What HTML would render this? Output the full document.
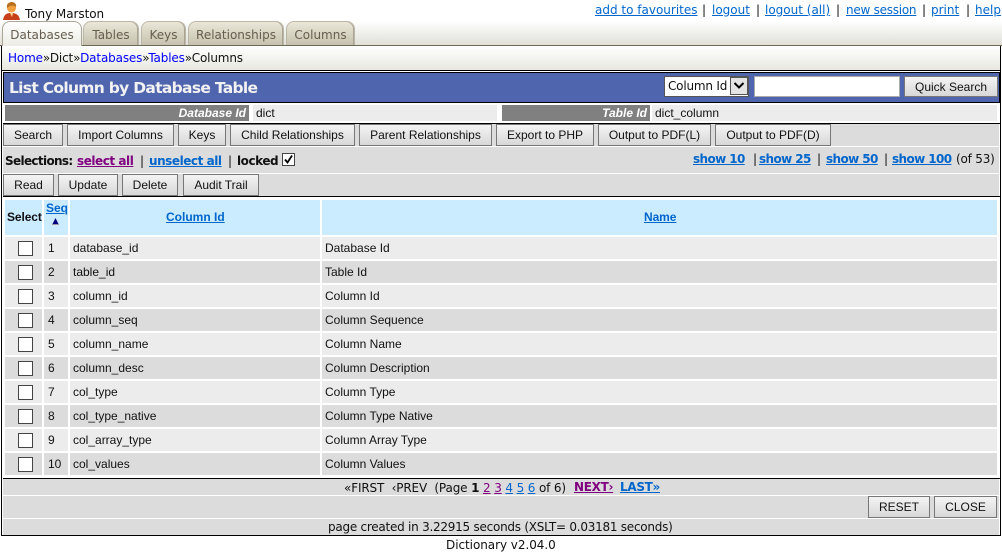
<!DOCTYPE html>
<html><head><meta charset="utf-8"><title>List Column by Database Table</title>
<style>
html,body{margin:0;padding:0;background:#fff;width:1002px;height:555px;overflow:hidden}
#p{position:relative;width:1002px;height:555px;overflow:hidden;font:12px "DejaVu Sans",sans-serif;color:#111}
#p div,#p a,#p span.a{position:absolute;white-space:nowrap}
#p .i,#p .i a,#p a.i{position:static}
a{color:#0066cc;text-decoration:underline}
a.v{color:#800080}
.b{box-sizing:border-box;border:1px solid #777;background:linear-gradient(#f4f4f4,#d8d8d8);font:12px/20px "Liberation Sans",sans-serif;text-align:center;color:#111}
.s{background:#dcdcdc}
.k{background:#000}
.w{background:#fff}
.t{font:12px/22px "Liberation Sans",sans-serif;color:#111}
.tab{box-sizing:border-box;top:21px;height:24px;border:1px solid #bdb8a6;border-bottom:0;border-radius:8px 8px 0 0;background:linear-gradient(#ebe7d9,#c6c2ae);font:12px/26px "DejaVu Sans",sans-serif;color:#655d4e;text-align:center;box-shadow:inset -1px 0 0 #a8a392}
.h{background:#cbebff}
.l{background:#808080;color:#fff;font:italic bold 12px/16px "Liberation Sans",sans-serif;text-align:right;box-sizing:border-box;padding-right:3px;height:16px;top:105px}
.f{background:#ececec;font:12px/16px "Liberation Sans",sans-serif;box-sizing:border-box;padding-left:3px;height:16px;top:105px}
.cb{box-sizing:border-box;width:15px;height:15px;left:18px;border:1px solid #444;background:#fff}
.tl{top:2px;line-height:16px}
.sl{top:153px;line-height:16px;letter-spacing:-.45px;font-weight:bold}
.sh{top:151px;line-height:16px;letter-spacing:-.6px;font-weight:bold}
.pg{top:480px;line-height:15px;letter-spacing:-.3px;font-weight:bold}
</style></head><body><div id="p">

<div style="left:0;top:21px;width:1002px;height:24px;background:linear-gradient(#fff,#e0e0d8)"></div>
<svg style="position:absolute;left:3px;top:2px" width="17" height="19" viewBox="0 0 17 19"><path d="M0 18C1 12 4 11 8 11s8 1 9 7z" fill="#c8401a"/><circle cx="8.500" cy="6" r="4.500" fill="#f0a040"/><path d="M4 6C3 1 7 0 9 0s5 2 4 5c-2-2-6-2-9 1z" fill="#b87020"/><path d="M7 11h3l-1 4z" fill="#f6d890"/></svg>
<div style="left:25px;top:6px;line-height:16px;letter-spacing:-.05px">Tony Marston</div>

<a class="tl" href="#" style="left:595px">add to favourites</a><div class="tl" style="left:702px">|</div>
<a class="tl" href="#" style="left:712px">logout</a><div class="tl" style="left:756px">|</div>
<a class="tl" href="#" style="left:765px">logout (all)</a><div class="tl" style="left:836px">|</div>
<a class="tl" href="#" style="left:846px;letter-spacing:-.25px">new session</a><div class="tl" style="left:922px">|</div>
<a class="tl" href="#" style="left:931px">print</a><div class="tl" style="left:966px">|</div>
<a class="tl" href="#" style="left:975px">help</a>

<div class="tab" style="left:2px;width:80px;height:25px;background:linear-gradient(#fff,#ececE4);border-color:#aaa596;z-index:2;box-shadow:none">Databases</div>
<div class="tab" style="left:83px;width:56px">Tables</div>
<div class="tab" style="left:141px;width:45px">Keys</div>
<div class="tab" style="left:188px;width:96px">Relationships</div>
<div class="tab" style="left:286px;width:69px">Columns</div>

<div style="left:0;top:45px;width:1002px;height:1px;background:#6e6858"></div>
<div style="left:1px;top:46px;width:1000px;height:24px;background:linear-gradient(#fff,#e8e8e0)"></div>
<div class="k" style="left:1px;top:46px;width:1px;height:490px"></div>
<div class="k" style="left:1000px;top:46px;width:1px;height:490px"></div>
<div style="left:8px;top:50px;line-height:16px;letter-spacing:-.15px"><span class="i"><a class="i" style="color:#00f;text-decoration:none" href="#">Home</a>»Dict»<a class="i" style="color:#00f;text-decoration:none" href="#">Databases</a>»<a class="i" style="color:#00f;text-decoration:none" href="#">Tables</a>»Columns</span></div>

<div class="k" style="left:1px;top:70px;width:1000px;height:1px"></div>
<div style="left:3px;top:72px;width:995px;height:29px;background:#4f65ae;border:1px solid #000"></div>
<div style="left:9px;top:77px;color:#f2f2f2;font:bold 15.500px/22px 'DejaVu Sans',sans-serif;letter-spacing:-.7px">List Column by Database Table</div>

<div style="left:664px;top:76px;width:85px;height:21px;box-sizing:border-box;border:1px solid #555;background:#fff;font:12px/19px 'DejaVu Sans',sans-serif;padding-left:3px;letter-spacing:-.2px">Column Id</div>
<div style="left:730px;top:77px;width:18px;height:18px;box-sizing:border-box;border:1px solid #555;background:#e4e4e4"></div>
<svg style="position:absolute;left:733px;top:82px" width="12" height="8" viewBox="0 0 12 8"><path d="M1.500 1L6 5.500 10.500 1" fill="none" stroke="#000" stroke-width="2"/></svg>
<div style="left:754px;top:76px;width:146px;height:21px;box-sizing:border-box;border:1px solid #aaa;background:#fff"></div>
<div class="b" style="left:904px;top:76px;width:94px;height:21px;line-height:20px">Quick Search</div>

<div class="l" style="left:5px;width:244px">Database Id</div>
<div class="f" style="left:253px;width:244px">dict</div>
<div class="l" style="left:502px;width:148px">Table Id</div>
<div class="f" style="left:652px;width:345px">dict_column</div>

<div class="k" style="left:3px;top:123px;width:997px;height:1px"></div>
<div class="s" style="left:3px;top:124px;width:996px;height:22px"></div>
<div class="w" style="left:3px;top:146px;width:996px;height:1px"></div>
<div class="s" style="left:3px;top:147px;width:996px;height:26px"></div>
<div class="w" style="left:3px;top:173px;width:996px;height:1px"></div>
<div class="s" style="left:3px;top:174px;width:996px;height:22px"></div>
<div class="k" style="left:3px;top:196px;width:997px;height:1px"></div>

<div class="b" style="left:3px;top:124px;width:60px;height:22px">Search</div>
<div class="b" style="left:67px;top:124px;width:107px;height:22px">Import Columns</div>
<div class="b" style="left:178px;top:124px;width:48px;height:22px">Keys</div>
<div class="b" style="left:230px;top:124px;width:125px;height:22px">Child Relationships</div>
<div class="b" style="left:359px;top:124px;width:133px;height:22px">Parent Relationships</div>
<div class="b" style="left:496px;top:124px;width:98px;height:22px">Export to PHP</div>
<div class="b" style="left:598px;top:124px;width:113px;height:22px">Output to PDF(L)</div>
<div class="b" style="left:715px;top:124px;width:116px;height:22px">Output to PDF(D)</div>

<div class="sl" style="left:5px;letter-spacing:-.65px">Selections:</div>
<a class="sl v" href="#" style="left:77px">select all</a>
<div class="sl" style="left:140px;font-weight:normal">|</div>
<a class="sl" href="#" style="left:149px">unselect all</a>
<div class="sl" style="left:228px;font-weight:normal">|</div>
<div class="sl" style="left:237px">locked</div>
<div style="left:282px;top:153px;width:13px;height:13px;box-sizing:border-box;border:1px solid #444;background:#fff"></div>
<svg style="position:absolute;left:283px;top:154px" width="11" height="11" viewBox="0 0 11 11"><path d="M2 5.500L4.500 8.500 9 1.500" fill="none" stroke="#000" stroke-width="1.800"/></svg>

<a class="sh" href="#" style="left:693px">show 10</a><div class="sh" style="left:753px;font-weight:normal">|</div>
<a class="sh" href="#" style="left:759px">show 25</a><div class="sh" style="left:817px;font-weight:normal">|</div>
<a class="sh" href="#" style="left:826px">show 50</a><div class="sh" style="left:884px;font-weight:normal">|</div>
<a class="sh" href="#" style="left:892px">show 100</a><div class="sh" style="left:956px;font-weight:normal;letter-spacing:-.2px">(of 53)</div>

<div class="b" style="left:3px;top:174px;width:51px;height:22px">Read</div>
<div class="b" style="left:58px;top:174px;width:60px;height:22px">Update</div>
<div class="b" style="left:122px;top:174px;width:56px;height:22px">Delete</div>
<div class="b" style="left:183px;top:174px;width:76px;height:22px">Audit Trail</div>

<div class="h" style="left:5px;top:200px;width:37px;height:35px"></div>
<div class="h" style="left:44px;top:200px;width:24px;height:35px"></div>
<div class="h" style="left:70px;top:200px;width:250px;height:35px"></div>
<div class="h" style="left:322px;top:200px;width:675px;height:35px"></div>
<div style="left:7px;top:209px;font:bold 12px/16px 'Liberation Sans',sans-serif;letter-spacing:-.1px">Select</div>
<a href="#" style="left:46px;top:200px;font:bold 12px/16px 'Liberation Sans',sans-serif">Seq</a>
<svg style="position:absolute;left:52px;top:218px" width="7" height="7" viewBox="0 0 7 7"><path d="M0 6.500H7" stroke="#999" stroke-width="1"/><path d="M3.500 0L6.500 6H.5z" fill="#000080"/></svg>
<a href="#" style="left:166px;top:209px;font:bold 12px/16px 'Liberation Sans',sans-serif">Column Id</a>
<a href="#" style="left:644px;top:209px;font:bold 12px/16px 'Liberation Sans',sans-serif;letter-spacing:-.1px">Name</a>

<div style="left:5px;top:237px;width:37px;height:22px;background:#ececec"></div><div style="left:44px;top:237px;width:24px;height:22px;background:#ececec"></div><div style="left:70px;top:237px;width:250px;height:22px;background:#ececec"></div><div style="left:322px;top:237px;width:675px;height:22px;background:#ececec"></div>
<div class="cb" style="top:241px"></div><div class="t" style="left:48px;top:237px">1</div><div class="t" style="left:73px;top:237px">database_id</div><div class="t" style="left:325px;top:237px">Database Id</div>

<div style="left:5px;top:261px;width:37px;height:22px;background:#dcdcdc"></div><div style="left:44px;top:261px;width:24px;height:22px;background:#dcdcdc"></div><div style="left:70px;top:261px;width:250px;height:22px;background:#dcdcdc"></div><div style="left:322px;top:261px;width:675px;height:22px;background:#dcdcdc"></div>
<div class="cb" style="top:265px"></div><div class="t" style="left:48px;top:261px">2</div><div class="t" style="left:73px;top:261px">table_id</div><div class="t" style="left:325px;top:261px">Table Id</div>

<div style="left:5px;top:285px;width:37px;height:22px;background:#ececec"></div><div style="left:44px;top:285px;width:24px;height:22px;background:#ececec"></div><div style="left:70px;top:285px;width:250px;height:22px;background:#ececec"></div><div style="left:322px;top:285px;width:675px;height:22px;background:#ececec"></div>
<div class="cb" style="top:289px"></div><div class="t" style="left:48px;top:285px">3</div><div class="t" style="left:73px;top:285px">column_id</div><div class="t" style="left:325px;top:285px">Column Id</div>

<div style="left:5px;top:309px;width:37px;height:22px;background:#dcdcdc"></div><div style="left:44px;top:309px;width:24px;height:22px;background:#dcdcdc"></div><div style="left:70px;top:309px;width:250px;height:22px;background:#dcdcdc"></div><div style="left:322px;top:309px;width:675px;height:22px;background:#dcdcdc"></div>
<div class="cb" style="top:313px"></div><div class="t" style="left:48px;top:309px">4</div><div class="t" style="left:73px;top:309px">column_seq</div><div class="t" style="left:325px;top:309px">Column Sequence</div>

<div style="left:5px;top:333px;width:37px;height:22px;background:#ececec"></div><div style="left:44px;top:333px;width:24px;height:22px;background:#ececec"></div><div style="left:70px;top:333px;width:250px;height:22px;background:#ececec"></div><div style="left:322px;top:333px;width:675px;height:22px;background:#ececec"></div>
<div class="cb" style="top:337px"></div><div class="t" style="left:48px;top:333px">5</div><div class="t" style="left:73px;top:333px">column_name</div><div class="t" style="left:325px;top:333px">Column Name</div>

<div style="left:5px;top:357px;width:37px;height:22px;background:#dcdcdc"></div><div style="left:44px;top:357px;width:24px;height:22px;background:#dcdcdc"></div><div style="left:70px;top:357px;width:250px;height:22px;background:#dcdcdc"></div><div style="left:322px;top:357px;width:675px;height:22px;background:#dcdcdc"></div>
<div class="cb" style="top:361px"></div><div class="t" style="left:48px;top:357px">6</div><div class="t" style="left:73px;top:357px">column_desc</div><div class="t" style="left:325px;top:357px">Column Description</div>

<div style="left:5px;top:381px;width:37px;height:22px;background:#ececec"></div><div style="left:44px;top:381px;width:24px;height:22px;background:#ececec"></div><div style="left:70px;top:381px;width:250px;height:22px;background:#ececec"></div><div style="left:322px;top:381px;width:675px;height:22px;background:#ececec"></div>
<div class="cb" style="top:385px"></div><div class="t" style="left:48px;top:381px">7</div><div class="t" style="left:73px;top:381px">col_type</div><div class="t" style="left:325px;top:381px">Column Type</div>

<div style="left:5px;top:405px;width:37px;height:22px;background:#dcdcdc"></div><div style="left:44px;top:405px;width:24px;height:22px;background:#dcdcdc"></div><div style="left:70px;top:405px;width:250px;height:22px;background:#dcdcdc"></div><div style="left:322px;top:405px;width:675px;height:22px;background:#dcdcdc"></div>
<div class="cb" style="top:409px"></div><div class="t" style="left:48px;top:405px">8</div><div class="t" style="left:73px;top:405px">col_type_native</div><div class="t" style="left:325px;top:405px">Column Type Native</div>

<div style="left:5px;top:429px;width:37px;height:22px;background:#ececec"></div><div style="left:44px;top:429px;width:24px;height:22px;background:#ececec"></div><div style="left:70px;top:429px;width:250px;height:22px;background:#ececec"></div><div style="left:322px;top:429px;width:675px;height:22px;background:#ececec"></div>
<div class="cb" style="top:433px"></div><div class="t" style="left:48px;top:429px">9</div><div class="t" style="left:73px;top:429px">col_array_type</div><div class="t" style="left:325px;top:429px">Column Array Type</div>

<div style="left:5px;top:453px;width:37px;height:22px;background:#dcdcdc"></div><div style="left:44px;top:453px;width:24px;height:22px;background:#dcdcdc"></div><div style="left:70px;top:453px;width:250px;height:22px;background:#dcdcdc"></div><div style="left:322px;top:453px;width:675px;height:22px;background:#dcdcdc"></div>
<div class="cb" style="top:457px"></div><div class="t" style="left:48px;top:453px">10</div><div class="t" style="left:73px;top:453px">col_values</div><div class="t" style="left:325px;top:453px">Column Values</div>

<div class="k" style="left:3px;top:478px;width:997px;height:1px"></div>
<div class="s" style="left:3px;top:479px;width:996px;height:16px"></div>
<div class="s" style="left:3px;top:496px;width:996px;height:22px"></div>
<div class="s" style="left:3px;top:519px;width:996px;height:16px"></div>
<div class="k" style="left:1px;top:535px;width:1000px;height:1px"></div>

<div style="left:344px;top:481px;line-height:15px;letter-spacing:-.14px"><span class="i">«FIRST &nbsp;‹PREV &nbsp;(Page <b>1</b> <a class="i v" href="#">2</a> <a class="i v" href="#">3</a> <a class="i" href="#">4</a> <a class="i" href="#">5</a> <a class="i" href="#">6</a> of 6)</span></div>
<a class="pg v" href="#" style="left:574px">NEXT›</a>
<a class="pg" href="#" style="left:620px">LAST»</a>

<div class="b" style="left:868px;top:496px;width:62px;height:22px">RESET</div>
<div class="b" style="left:934px;top:496px;width:63px;height:22px">CLOSE</div>

<div style="left:328px;top:520px;line-height:15px;letter-spacing:-.25px">page created in 3.22915 seconds (XSLT= 0.03181 seconds)</div>
<div style="left:446px;top:538px;line-height:15px;letter-spacing:-.05px">Dictionary v2.04.0</div>

</div></body></html>
